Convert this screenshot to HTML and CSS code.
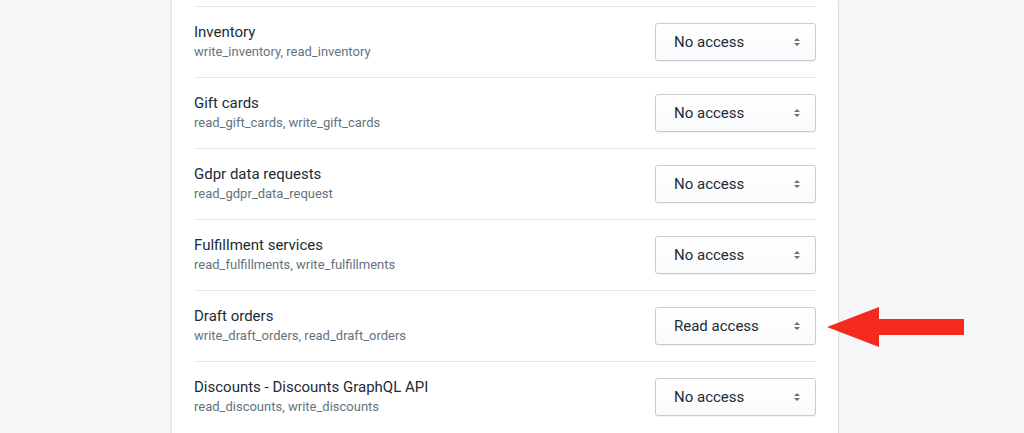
FILE: index.html
```html
<!DOCTYPE html>
<html lang="en">
<head>
    <meta charset="UTF-8">
    <title>App permissions</title>
    <link rel="stylesheet" href="styles.css">
</head>
<body>
    <div class="card">
        <div class="scope">
            <div class="scope-info">
                <div class="scope-title">Inventory</div>
                <div class="scope-names">write_inventory, read_inventory</div>
            </div>
            <div class="select"><span>No access</span><svg width="8" height="12" viewBox="0 0 8 12"><path d="M1 5 L4 2 L7 5 Z M1 7 L4 10 L7 7 Z" fill="#637381"/></svg></div>
        </div>
        <div class="scope">
            <div class="scope-info">
                <div class="scope-title">Gift cards</div>
                <div class="scope-names">read_gift_cards, write_gift_cards</div>
            </div>
            <div class="select"><span>No access</span><svg width="8" height="12" viewBox="0 0 8 12"><path d="M1 5 L4 2 L7 5 Z M1 7 L4 10 L7 7 Z" fill="#637381"/></svg></div>
        </div>
        <div class="scope">
            <div class="scope-info">
                <div class="scope-title">Gdpr data requests</div>
                <div class="scope-names">read_gdpr_data_request</div>
            </div>
            <div class="select"><span>No access</span><svg width="8" height="12" viewBox="0 0 8 12"><path d="M1 5 L4 2 L7 5 Z M1 7 L4 10 L7 7 Z" fill="#637381"/></svg></div>
        </div>
        <div class="scope">
            <div class="scope-info">
                <div class="scope-title">Fulfillment services</div>
                <div class="scope-names">read_fulfillments, write_fulfillments</div>
            </div>
            <div class="select"><span>No access</span><svg width="8" height="12" viewBox="0 0 8 12"><path d="M1 5 L4 2 L7 5 Z M1 7 L4 10 L7 7 Z" fill="#637381"/></svg></div>
        </div>
        <div class="scope">
            <div class="scope-info">
                <div class="scope-title">Draft orders</div>
                <div class="scope-names">write_draft_orders, read_draft_orders</div>
            </div>
            <div class="select"><span>Read access</span><svg width="8" height="12" viewBox="0 0 8 12"><path d="M1 5 L4 2 L7 5 Z M1 7 L4 10 L7 7 Z" fill="#637381"/></svg></div>
            <svg class="arrow" width="138" height="42" viewBox="0 0 138 42"><path d="M0 21 L52 1 L52 13 L137 13 L137 29 L52 29 L52 41 Z" fill="#f42a1e"/></svg>
        </div>
        <div class="scope">
            <div class="scope-info">
                <div class="scope-title">Discounts - Discounts GraphQL API</div>
                <div class="scope-names">read_discounts, write_discounts</div>
            </div>
            <div class="select"><span>No access</span><svg width="8" height="12" viewBox="0 0 8 12"><path d="M1 5 L4 2 L7 5 Z M1 7 L4 10 L7 7 Z" fill="#637381"/></svg></div>
        </div>
    </div>
</body>
</html>
```

FILE: styles.css
```css
body {
    margin: 0;
    background-color: #f4f6f8;
    font-family: Roboto, "Noto Sans", sans-serif;
    color: #212b36;
    height: 433px;
    overflow: hidden;
}
.card {
    width: 622px;
    margin-left: 172px;
    padding: 0 22px;
    background-color: #fff;
    box-shadow: 0 0 0 1px rgba(63, 63, 68, 0.05), 0 1px 3px 0 rgba(63, 63, 68, 0.15);
    padding-top: 6px;
    min-height: 440px;
}
.scope {
    position: relative;
    display: flex;
    justify-content: space-between;
    align-items: center;
    height: 70px;
    border-top: 1px solid #e6e9ec;
}
.scope-info {
    margin-top: -1px;
}
.scope-title {
    font-size: 15px;
    line-height: 20px;
}
.scope-names {
    font-size: 13px;
    line-height: 20px;
    color: #637381;
}
.select {
    width: 127px;
    height: 36px;
    margin-top: -1px;
    padding: 0 14px 0 18px;
    display: flex;
    align-items: center;
    justify-content: space-between;
    border: 1px solid #c4cdd5;
    border-radius: 3px;
    background: linear-gradient(#fff, #f9fafb);
    box-shadow: 0 1px 0 0 rgba(22, 29, 37, 0.05);
    font-size: 15px;
}
.arrow {
    position: absolute;
    left: 633px;
    top: 15px;
}
```
